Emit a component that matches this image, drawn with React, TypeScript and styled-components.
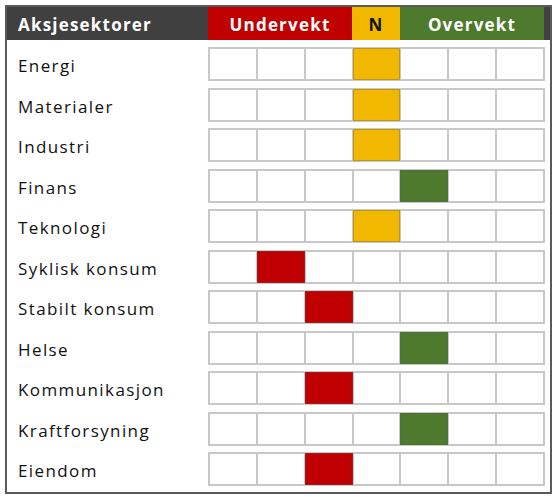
import styled, { createGlobalStyle } from "styled-components";

const GlobalStyle = createGlobalStyle`
    body {
        margin: 0;
        background: #ffffff;
        font-family: "Open Sans", "Liberation Sans", sans-serif;
    }
`;

const sectors = [
    { name: "Energi", pos: 3 },
    { name: "Materialer", pos: 3 },
    { name: "Industri", pos: 3 },
    { name: "Finans", pos: 4 },
    { name: "Teknologi", pos: 3 },
    { name: "Syklisk konsum", pos: 1 },
    { name: "Stabilt konsum", pos: 2 },
    { name: "Helse", pos: 4 },
    { name: "Kommunikasjon", pos: 2 },
    { name: "Kraftforsyning", pos: 4 },
    { name: "Eiendom", pos: 2 },
];

const RED = "#c00000";
const YELLOW = "#f2b800";
const GREEN = "#4e7a2e";

const colorFor = (col: number) => (col < 3 ? RED : col === 3 ? YELLOW : GREEN);

const Frame = styled.div`
    margin: 5px 0 0 5px;
    width: 547px;
    box-sizing: border-box;
    border: 2px solid #5a5a5a;
    background: #ffffff;
`;

const Header = styled.div`
    display: grid;
    grid-template-columns: 201px 144px 48px 144px 6px;
    height: 33px;
    background: #404040;
`;

const HeadCell = styled.div<{ $bg?: string; $fg?: string; $left?: boolean }>`
    display: flex;
    align-items: center;
    justify-content: ${(p) => (p.$left ? "flex-start" : "center")};
    padding-left: ${(p) => (p.$left ? "11px" : "0")};
    padding-top: 2px;
    background: ${(p) => p.$bg ?? "transparent"};
    color: ${(p) => p.$fg ?? "#ffffff"};
    font-weight: 700;
    font-size: 17px;
    letter-spacing: 1.2px;
`;

const Body = styled.div`
    display: flex;
    flex-direction: column;
    gap: 6.5px;
    padding: 7px 0 6px;
`;

const Row = styled.div`
    display: grid;
    grid-template-columns: 201px 337px;
    height: 34px;
`;

const Label = styled.div`
    display: flex;
    align-items: center;
    padding-left: 11px;
    padding-top: 3px;
    font-size: 17px;
    letter-spacing: 1.4px;
    color: #111111;
`;

const Cells = styled.div`
    display: grid;
    grid-template-columns: repeat(7, 1fr);
    border: 1px solid #c8c8c8;
`;

const Cell = styled.div<{ $fill?: string }>`
    border: 1px solid ${(p) => (p.$fill ? "rgba(90,90,90,0.35)" : "#c8c8c8")};
    background: ${(p) => p.$fill ?? "#ffffff"};
`;

export default function App() {
    return (
        <>
            <GlobalStyle />
            <Frame>
                <Header>
                    <HeadCell $left>Aksjesektorer</HeadCell>
                    <HeadCell $bg={RED}>Undervekt</HeadCell>
                    <HeadCell $bg={YELLOW} $fg="#111111">N</HeadCell>
                    <HeadCell $bg={GREEN}>Overvekt</HeadCell>
                    <HeadCell />
                </Header>
                <Body>
                    {sectors.map((s) => (
                        <Row key={s.name}>
                            <Label>{s.name}</Label>
                            <Cells>
                                {Array.from({ length: 7 }, (_, i) => (
                                    <Cell key={i} $fill={i === s.pos ? colorFor(i) : undefined} />
                                ))}
                            </Cells>
                        </Row>
                    ))}
                </Body>
            </Frame>
        </>
    );
}
